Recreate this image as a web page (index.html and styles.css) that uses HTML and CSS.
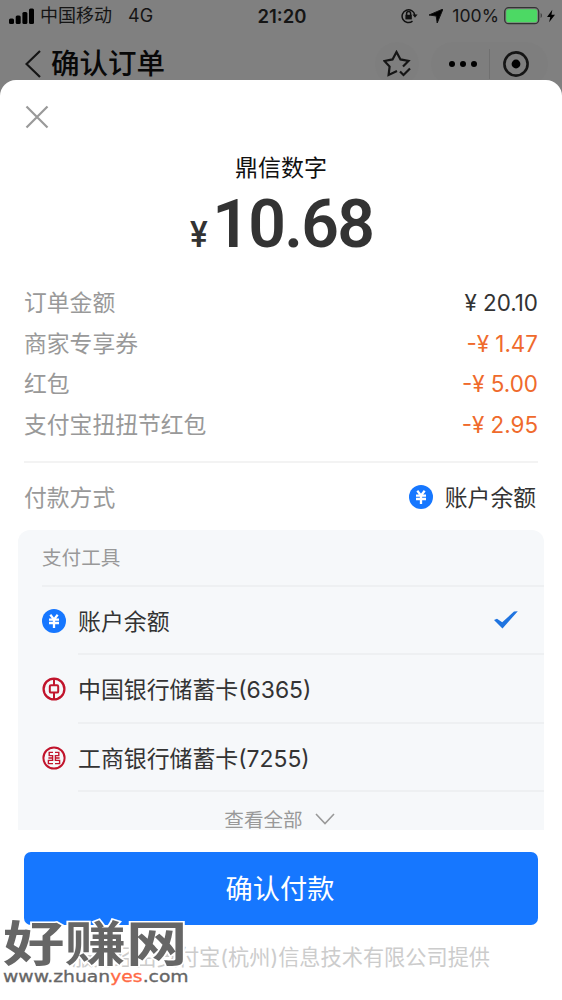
FILE: index.html
```html
<!DOCTYPE html>
<html lang="zh-CN">
<head>
<meta charset="utf-8">
<title>确认订单</title>
<link rel="stylesheet" href="styles.css">
</head>
<body>
<div class="screen">
  <div class="status">
    <div class="status-left">
      <svg width="26" height="16" viewBox="0 0 26 16"><rect x="0" y="10.5" width="5" height="5.5" rx="1.5"/><rect x="6.7" y="7.5" width="5" height="8.5" rx="1.5"/><rect x="13.4" y="4" width="5" height="12" rx="1.5"/><rect x="20" y="0.5" width="5" height="15.5" rx="1.5"/></svg>
      <span class="carrier">中国移动</span><span>4G</span>
    </div>
    <span class="time">21:20</span>
    <div class="status-right">
      <svg width="17" height="16" viewBox="0 0 17 16" fill="none" stroke="#111" stroke-width="1.5"><path d="M13.8 7A6.4 6.4 0 1 0 11.5 13.2"/><path d="M11.4 6.6h5.2L14 9.8z" fill="#111" stroke="none"/><path d="M5.6 7V5.6a2 2 0 0 1 4 0V7"/><rect x="4.4" y="6.8" width="6.4" height="4.6" fill="#111" stroke="none"/></svg>
      <svg class="loc" width="14" height="14" viewBox="0 0 14 14"><path d="M14 0L8.2 14L7.2 7L0 6z" stroke="#111"/></svg>
      <span class="pct">100%</span>
      <svg width="38" height="18" viewBox="0 0 38 18"><rect x="0.7" y="0.7" width="34" height="16" rx="4" fill="none" stroke="#333" stroke-width="1.3"/><rect x="2.2" y="2.2" width="31" height="13" rx="2.5" fill="#4cd964"/><path d="M36.7 6c1.5 1 1.5 4 0 5z" fill="#333"/></svg>
      <svg class="bolt" width="8" height="14" viewBox="0 0 9 14"><path d="M6 0L0 8h3.7L2.4 14L9 5.5H5z"/></svg>
    </div>
  </div>
  <div class="nav">
    <svg class="back" width="16" height="28" viewBox="0 0 16 28"><path d="M15 1L1.5 14L15 27"/></svg>
    <span class="nav-title">确认订单</span>
    <div class="fav"><svg width="28" height="28" viewBox="0 0 28 28"><path d="M14 21L5.6 25L6.6 16.6L1.4 11L9.5 9.4L13.5 2L17.5 9.4L25.5 11L20 16.5M17 21.5L20.5 25L27 18.5"/></svg></div>
    <div class="capsule">
      <svg width="30" height="8" viewBox="0 0 30 8"><circle cx="4" cy="4" r="3"/><circle cx="15" cy="4" r="3"/><circle cx="26" cy="4" r="3"/></svg>
      <i></i>
      <svg width="26" height="26" viewBox="0 0 26 26"><circle cx="13" cy="13" r="11.6" fill="none" stroke="#151515" stroke-width="2.6"/><circle cx="13" cy="13" r="4.4"/></svg>
    </div>
  </div>
  <main class="sheet">
    <svg class="close" width="24" height="24" viewBox="0 0 24 24"><path d="M1.5 1.5l21 21M22.5 1.5l-21 21"/></svg>
    <div class="merchant">鼎信数字</div>
    <div class="amount"><span class="yen">¥</span><span class="total">10.68</span></div>
    <div class="lines">
      <div class="line"><span>订单金额</span><b>¥ 20.10</b></div>
      <div class="line off"><span>商家专享券</span><b>-¥ 1.47</b></div>
      <div class="line off"><span>红包</span><b>-¥ 5.00</b></div>
      <div class="line off"><span>支付宝扭扭节红包</span><b>-¥ 2.95</b></div>
    </div>
    <div class="method">
      <span class="label">付款方式</span>
      <svg width="24" height="24" viewBox="0 0 24 24"><circle cx="12" cy="12" r="12" fill="#1677ff"/><path d="M8.3 5.8l3.7 4.6L15.7 5.8M7 10.6h10M7 14h10M12 10.5V19" fill="none" stroke="#fff" stroke-width="2.3"/></svg>
      <span class="value">账户余额</span>
    </div>
    <section class="tools">
      <div class="tools-head">支付工具</div>
      <div class="tool">
        <svg width="24" height="24" viewBox="0 0 24 24"><circle cx="12" cy="12" r="12" fill="#1677ff"/><path d="M8.3 5.8l3.7 4.6L15.7 5.8M7 10.6h10M7 14h10M12 10.5V19" fill="none" stroke="#fff" stroke-width="2.3"/></svg>
        <div class="tool-name"><span>账户余额</span><svg class="check" width="24" height="18" viewBox="0 0 24 18"><path d="M0 9L3 7.8L8.2 11.2L20 0.5L23.8 0.3L8.5 17.4z" fill="#1f74e0"/></svg></div>
      </div>
      <div class="tool">
        <svg width="24" height="24" viewBox="0 0 24 24" fill="none" stroke="#c1142c"><circle cx="12" cy="12" r="10.4" stroke-width="2.3"/><rect x="7.8" y="8.2" width="8.4" height="7.4" rx="1.2" stroke-width="2"/><path d="M12 2v6.3M12 16v6" stroke-width="2"/></svg>
        <div class="tool-name">中国银行储蓄卡(6365)</div>
      </div>
      <div class="tool">
        <svg width="24" height="24" viewBox="0 0 24 24" fill="none" stroke="#c1142c"><circle cx="12" cy="12" r="10.6" stroke-width="2"/><path d="M11 6.4H7.2V9.6H10.6V14.4H6.4V17.6H11M13 6.4H16.8V9.6H13.4V14.4H17.6V17.6H13M6.4 12H10.6M13.4 12H17.6" stroke-width="1.4"/></svg>
        <div class="tool-name">工商银行储蓄卡(7255)</div>
      </div>
      <div class="more">查看全部<svg width="20" height="12" viewBox="0 0 20 12"><path d="M1 1l9 9.5L19 1"/></svg></div>
    </section>
    <button class="pay">确认付款</button>
    <div class="provider">服务经由支付宝(杭州)信息技术有限公司提供</div>
  </main>
  <div class="watermark">
    <div class="mark-name">好赚网</div>
    <div class="mark-url">www.zhuan<em>yes</em>.com</div>
  </div>
</div>
</body>
</html>
```
FILE: styles.css
```css
* { box-sizing: border-box; }
body { margin: 0; }
svg { display: block; flex: none; }
.screen {
  position: relative;
  width: 562px;
  height: 1000px;
  overflow: hidden;
  background: #808080;
  color: #333;
  font-family: Inter, "Noto Sans CJK SC", sans-serif;
}
.status {
  display: grid;
  grid-template-columns: 1fr auto 1fr;
  align-items: center;
  height: 32px;
  padding: 0 7px 0 9px;
  color: #151515;
  font-size: 18px;
  line-height: 32px;
}
.status-left, .status-right { display: flex; align-items: center; }
.carrier { margin: 0 16px 0 5px; }
.time { font-weight: 600; font-size: 18.5px; }
.status-right { justify-content: flex-end; }
.loc { margin: 0 9px 0 11px; }
.pct { margin-right: 5px; font-size: 17.6px; }
.bolt { margin-left: 5px; }
.nav {
  display: flex;
  align-items: center;
  height: 64px;
  margin-bottom: -16px;
  padding: 0 14px 0 25px;
}
.back, .fav svg, .close, .more svg { fill: none; stroke: #151515; stroke-width: 2.2; }
.nav-title { margin-left: 10px; font-size: 28.5px; line-height: 46px; font-weight: 500; color: #080808; }
.fav {
  display: grid;
  place-items: center;
  width: 44px;
  height: 44px;
  margin-left: auto;
  border-radius: 22px;
  background: #7e7e7e;
}
.capsule {
  display: flex;
  align-items: center;
  width: 117px;
  height: 44px;
  margin-left: 12px;
  padding-left: 17px;
  border-radius: 22px;
  background: #7e7e7e;
}
.capsule i { width: 1px; height: 30px; margin: 0 13px 0 11px; background: #707070; }
.sheet {
  position: relative;
  display: flex;
  flex-direction: column;
  height: 920px;
  padding: 25px 24px 0;
  border-radius: 16px 16px 0 0;
  background: #fff;
}
.close { margin-left: 1px; stroke: #999; }
.merchant { margin-top: 23px; height: 32px; line-height: 32px; font-size: 23px; text-align: center; color: #111; }
.amount {
  display: flex;
  justify-content: center;
  align-items: baseline;
  height: 80px;
  padding-top: 1px;
  line-height: 80px;
  font-family: Roboto, sans-serif;
}
.yen { margin-right: 4px; font-size: 37px; font-weight: 500; transform: scaleX(0.9); }
.total { font-size: 66px; font-weight: 600; letter-spacing: -1.7px; }
.lines { margin-top: 19px; height: 180px; padding-bottom: 0; border-bottom: 2px solid #f3f3f3; }
.line {
  display: flex;
  justify-content: space-between;
  height: 40.5px;
  line-height: 40px;
  font-size: 22.8px;
  color: #999;
}
.line b { font-size: 22.4px; font-weight: 400; color: #333; }
.line.off b { color: #ef6a2c; }
.method { display: flex; align-items: center; height: 67px; padding-right: 2px; font-size: 22.8px; }
.label { flex: 1; color: #999; }
.value { margin-left: 12px; }
.tools {
  height: 300px;
  margin: 0 -6px;
  overflow: hidden;
  border-radius: 12px 12px 0 0;
  background: #f6f8fa;
}
.tools-head {
  height: 57px;
  margin-left: 24px;
  line-height: 57px;
  font-size: 19.6px;
  color: #999;
  border-bottom: 2px solid #eef0f2;
}
.tool { display: flex; align-items: center; padding-left: 24px; height: 68.3px; }
.tool-name {
  display: flex;
  flex: 1;
  align-items: center;
  justify-content: space-between;
  height: 100%;
  margin-left: 12px;
  padding-right: 26px;
  font-size: 22.9px;
  border-bottom: 2px solid #eef0f2;
}
.more {
  display: flex;
  justify-content: center;
  align-items: center;
  gap: 12px;
  height: 54px;
  padding-right: 3px;
  font-size: 19.6px;
  color: #999;
}
.more svg { stroke: #999; stroke-width: 1.6; }
.pay {
  flex: none;
  height: 73px;
  margin-top: 22px;
  padding: 3px 2px 0 0;
  border: 0;
  border-radius: 7px;
  background: #1677ff;
  color: #fff;
  font: 27.2px/70px Inter, "Noto Sans CJK SC", sans-serif;
}
.provider { margin-top: 15px; line-height: 34px; font-size: 21.2px; text-align: center; white-space: nowrap; color: #ccc; }
/* Site mark laid over the lower left corner */
.watermark {
  position: absolute;
  left: 3px;
  top: 918px;
  width: 186px;
  color: #666;
}
.mark-name {
  height: 50px;
  line-height: 52px;
  font-size: 48px;
  font-weight: 700;
  white-space: nowrap;
  transform: scaleX(1.28);
  transform-origin: 0 0;
  -webkit-text-stroke: 3px #fff;
  paint-order: stroke fill;
}
.mark-url {
  font: 15px/18px "DejaVu Sans", sans-serif;
  white-space: nowrap;
  transform: scaleX(1.25);
  transform-origin: 0 0;
  -webkit-text-stroke: 0.3px #666;
}
.mark-url em { font-style: normal; color: #ff6a45; -webkit-text-stroke: 0.3px #ff6a45; }
```
